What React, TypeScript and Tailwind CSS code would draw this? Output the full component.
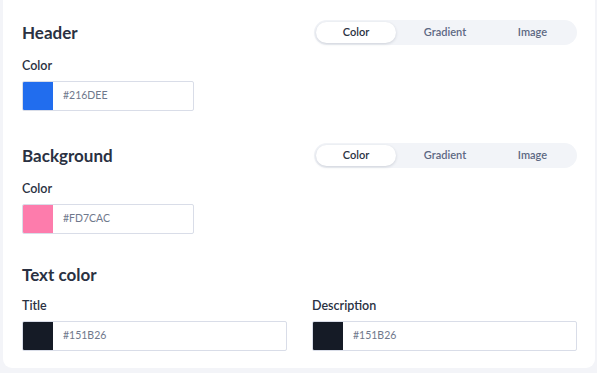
import React from "react";

const font = { fontFamily: "Lato, 'Open Sans', sans-serif" };

function Tabs() {
  return (
    <div className="flex w-[263px] h-[25px] rounded-full bg-[#f2f4f8] p-[2px] text-[11px] font-semibold">
      <div className="w-[80px] flex items-center justify-center rounded-full bg-white text-[#2a3142] shadow-[0_1px_3px_rgba(40,50,80,0.18)]">
        Color
      </div>
      <div className="w-[90px] ml-[4px] flex items-center justify-center text-[#5d6883]">Gradient</div>
      <div className="w-[85px] flex items-center justify-center text-[#5d6883]">Image</div>
    </div>
  );
}

function ColorInput({ color, value, width }: { color: string; value: string; width: string }) {
  return (
    <div className={`flex h-[30px] ${width} rounded-[2px] border border-[#d9dde8] bg-white overflow-hidden`}>
      <div className="w-[30px] h-full" style={{ backgroundColor: color }} />
      <div className="flex items-center pl-[10px] text-[10.5px] text-[#6f788c]">{value}</div>
    </div>
  );
}

function Label({ children }: { children: React.ReactNode }) {
  return <div className="h-[16px] leading-[16px] text-[12.5px] font-semibold text-[#2a3142]">{children}</div>;
}

export default function App() {
  return (
    <div className="w-[597px] h-[373px] bg-[#f3f4f8] pl-[3px] pr-[2px]" style={font}>
      <div className="h-[368px] bg-white rounded-b-[9px] px-[19px] pt-[20px] pr-[18px]">
        {/* Header */}
        <div className="flex h-[25px] items-center justify-between">
          <div className="text-[17px] font-bold text-[#2a3142]">Header</div>
          <Tabs />
        </div>
        <div className="mt-[13px]">
          <Label>Color</Label>
        </div>
        <div className="mt-[7px]">
          <ColorInput color="#216DEE" value="#216DEE" width="w-[172px]" />
        </div>

        {/* Background */}
        <div className="mt-[32px] flex h-[25px] items-center justify-between">
          <div className="text-[17px] font-bold text-[#2a3142]">Background</div>
          <Tabs />
        </div>
        <div className="mt-[13px]">
          <Label>Color</Label>
        </div>
        <div className="mt-[7px]">
          <ColorInput color="#FD7CAC" value="#FD7CAC" width="w-[172px]" />
        </div>

        {/* Text color */}
        <div className="mt-[28px] flex h-[25px] items-center">
          <div className="text-[17px] font-bold text-[#2a3142]">Text color</div>
        </div>
        <div className="mt-[11px] grid grid-cols-2 gap-x-[25px]">
          <div>
            <Label>Title</Label>
            <div className="mt-[7px]">
              <ColorInput color="#151B26" value="#151B26" width="w-full" />
            </div>
          </div>
          <div>
            <Label>Description</Label>
            <div className="mt-[7px]">
              <ColorInput color="#151B26" value="#151B26" width="w-full" />
            </div>
          </div>
        </div>
      </div>
    </div>
  );
}
